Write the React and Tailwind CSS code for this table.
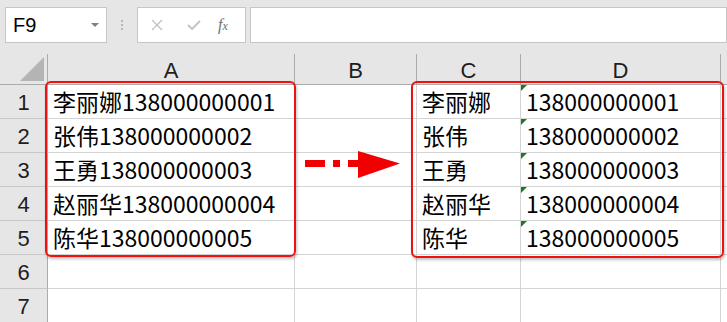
const rows = [
  { a: "李丽娜138000000001", c: "李丽娜", d: "138000000001" },
  { a: "张伟138000000002", c: "张伟", d: "138000000002" },
  { a: "王勇138000000003", c: "王勇", d: "138000000003" },
  { a: "赵丽华138000000004", c: "赵丽华", d: "138000000004" },
  { a: "陈华138000000005", c: "陈华", d: "138000000005" },
  { a: "", c: "", d: "" },
  { a: "", c: "", d: "" },
];

const cellFont = { fontFamily: '"Noto Sans CJK SC", "Liberation Sans", sans-serif' };

function FormulaBar() {
  return (
    <div className="flex items-start h-[53px] bg-[#e6e6e6] pt-[7px] pl-[5px]">
      <div className="flex items-center justify-between w-[102px] h-[36px] bg-white border border-[#c6c6c6] pl-[7px] pr-[7px]">
        <span className="text-[20px] text-black" style={{ fontFamily: '"Liberation Sans", sans-serif' }}>F9</span>
        <span className="w-0 h-0 border-l-[4px] border-r-[4px] border-t-[4px] border-l-transparent border-r-transparent border-t-[#7f7f7f]" />
      </div>
      <div className="flex flex-col gap-[2px] w-[30px] items-center pt-[13px]">
        <span className="w-[2px] h-[2px] bg-[#b5b5b5]" />
        <span className="w-[2px] h-[2px] bg-[#b5b5b5]" />
        <span className="w-[2px] h-[2px] bg-[#b5b5b5]" />
      </div>
      <div className="flex items-center w-[109px] h-[36px] bg-white border border-[#c6c6c6] pl-[13px]">
        <svg width="12" height="12" viewBox="0 0 12 12" className="mr-[24px]">
          <path d="M1 1 L11 11 M11 1 L1 11" stroke="#c2c2c2" strokeWidth="1.4" fill="none" />
        </svg>
        <svg width="14" height="12" viewBox="0 0 14 12" className="mr-[17px]">
          <path d="M1 6 L5 10 L13 2" stroke="#c2c2c2" strokeWidth="1.8" fill="none" />
        </svg>
        <span className="italic text-[16px] text-[#6f6f6f] leading-none" style={{ fontFamily: '"Liberation Serif", serif' }}>
          f<span className="text-[12px]">x</span>
        </span>
      </div>
      <div className="ml-[4px] flex-1 h-[36px] bg-white border border-[#c6c6c6]" />
    </div>
  );
}

function HeaderRow() {
  const cols = [
    { l: "A", w: "w-[247px]" },
    { l: "B", w: "w-[122px]" },
    { l: "C", w: "w-[104px]" },
    { l: "D", w: "w-[200px]" },
  ];
  return (
    <div className="flex h-[32px] bg-[#e6e6e6] border-b border-[#ababab]">
      <div className="relative w-[48px] shrink-0 border-r border-[#ababab] mt-[1px]">
        <svg width="24" height="24" viewBox="0 0 24 24" className="absolute right-[3px] bottom-[3px]">
          <polygon points="24,0 24,24 0,24" fill="#b4b4b4" />
        </svg>
      </div>
      {cols.map((c) => (
        <div
          key={c.l}
          className={`${c.w} shrink-0 flex items-end justify-center pb-[2px] border-r border-[#ababab] mt-[1px] text-[22px] text-[#1e1e1e] leading-none`}
          style={{ fontFamily: '"Liberation Sans", sans-serif' }}
        >
          {c.l}
        </div>
      ))}
      <div className="flex-1" />
    </div>
  );
}

function Row({ n, r }) {
  return (
    <div className="flex h-[34px]">
      <div
        className="w-[48px] shrink-0 bg-[#e6e6e6] border-r border-[#ababab] border-b border-b-[#c8c8c8] flex items-center justify-center text-[22px] text-[#1e1e1e] pt-[2px]"
        style={{ fontFamily: '"Liberation Sans", sans-serif' }}
      >
        {n}
      </div>
      <div className="w-[247px] shrink-0 border-r border-b border-[#d4d4d4] pl-[5px] flex items-center text-[23px] text-black" style={cellFont}>
        {r.a}
      </div>
      <div className="w-[122px] shrink-0 border-r border-b border-[#d4d4d4]" />
      <div className="w-[104px] shrink-0 border-r border-b border-[#d4d4d4] pl-[5px] flex items-center text-[23px] text-black" style={cellFont}>
        {r.c}
      </div>
      <div className="relative w-[200px] shrink-0 border-r border-b border-[#d4d4d4] pl-[5px] flex items-center text-[23px] text-black" style={cellFont}>
        {r.d && (
          <span className="absolute left-0 top-0 w-0 h-0 border-t-[6px] border-r-[6px] border-t-[#1e7b1e] border-r-transparent" />
        )}
        {r.d}
      </div>
      <div className="flex-1 border-b border-[#d4d4d4]" />
    </div>
  );
}

export default function App() {
  return (
    <div className="relative w-[727px] h-[322px] overflow-hidden bg-white">
      <FormulaBar />
      <HeaderRow />
      {rows.map((r, i) => (
        <Row key={i} n={i + 1} r={r} />
      ))}
      <div className="absolute left-[45px] top-[81px] w-[251px] h-[176px] border-2 border-[#f01010] rounded-[6px] shadow-[1px_2px_3px_rgba(0,0,0,0.25)]" />
      <div className="absolute left-[411px] top-[81px] w-[313px] h-[177px] border-2 border-[#f01010] rounded-[6px] shadow-[1px_2px_3px_rgba(0,0,0,0.25)]" />
      <svg className="absolute left-[300px] top-[148px]" width="104" height="34" viewBox="0 0 104 34">
        <g fill="#f00000">
          <rect x="5" y="12" width="20" height="7" />
          <rect x="33" y="12" width="7" height="7" />
          <rect x="48" y="12" width="12" height="7" />
          <polygon points="58,3 100,15.5 58,30" />
        </g>
      </svg>
    </div>
  );
}
